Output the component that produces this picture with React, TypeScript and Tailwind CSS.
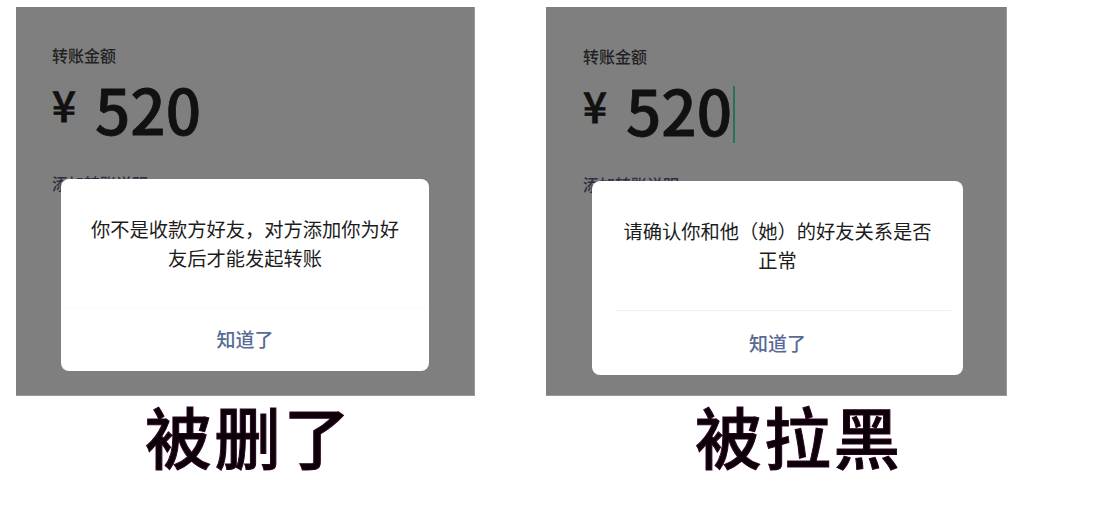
import clsx from 'clsx';

interface TransferPanelProps {
  /** Lines of the dialog message */
  message: string[];
  /** Large caption under the panel */
  caption: string;
  /** Sizes that differ between the two phones */
  panelClass: string;
  dialogClass: string;
  captionClass: string;
  dividerClass: string;
  buttonClass: string;
  /** Show the input caret after the amount */
  showCaret?: boolean;
}

/**
 * TransferPanel - Dimmed transfer form with an alert dialog on top
 * and a caption below.
 */
function TransferPanel({
  message,
  caption,
  panelClass,
  dialogClass,
  captionClass,
  dividerClass,
  buttonClass,
  showCaret = false,
}: TransferPanelProps) {
  return (
    <section className="flex flex-col">
      <div className={clsx('relative h-[389px] bg-[#7f7f7f] text-[#111111] border-r border-b border-[#999999]', panelClass)}>
        <p className="text-base leading-6 font-medium text-[#222222]">转账金额</p>

        {/* Amount */}
        <div className="mt-[11px] flex h-[64px] items-start font-medium [-webkit-text-stroke:0.8px_#111111]">
          <span className="w-[42px] text-[42px] leading-[51px]">¥</span>
          <span className="pl-px text-[62px] leading-[61px]">520</span>
          {showCaret && <span className="mt-[7px] ml-px h-[57px] w-[2px] bg-[#26735a]" />}
        </div>

        <p className="mt-[29px] text-base leading-6 font-medium text-[#2b3040]">添加转账说明</p>

        {/* Dialog */}
        <div
          role="alertdialog"
          className={clsx('absolute flex flex-col rounded-lg bg-white', dialogClass)}
        >
          <div className="flex flex-1 flex-col items-center pt-9 text-[19.25px] leading-[28.5px] text-[#1c1c1c]">
            {message.map((line) => (
              <p key={line} className="whitespace-nowrap">
                {line}
              </p>
            ))}
          </div>
          <div className={clsx('h-px', dividerClass)} />
          <button className={clsx('text-[19px] font-medium text-[#576b95]', buttonClass)}>知道了</button>
        </div>
      </div>

      <h2
        className={clsx(
          'text-[66.5px] leading-[79px] font-medium tracking-[2.8px] whitespace-nowrap text-[#0c0009] [-webkit-text-stroke:1px_#2a0320]',
          captionClass
        )}
      >
        {caption}
      </h2>
    </section>
  );
}

export default function App() {
  return (
    <main
      lang="zh-CN"
      className="flex h-[505px] w-[1101px] items-start gap-[71px] overflow-hidden bg-white pt-[7px] pl-4 font-['Noto_Sans_CJK_SC',sans-serif]"
    >
      <TransferPanel
        message={['你不是收款方好友，对方添加你为好', '友后才能发起转账']}
        caption="被删了"
        panelClass="w-[459px] pt-9 pl-9"
        dialogClass="top-[172px] left-[45px] h-[192px] w-[368px]"
        captionClass="pl-[129px]"
        dividerClass="mx-1 bg-[#fafafa]"
        buttonClass="h-[63px]"
      />
      <TransferPanel
        message={['请确认你和他（她）的好友关系是否', '正常']}
        caption="被拉黑"
        panelClass="w-[461px] pt-[37px] pl-[37px]"
        dialogClass="top-[174px] left-[46px] h-[194px] w-[371px]"
        captionClass="pl-[149px]"
        dividerClass="ml-6 mr-3 bg-[#f0f0f0]"
        buttonClass="h-[64px]"
        showCaret
      />
    </main>
  );
}
